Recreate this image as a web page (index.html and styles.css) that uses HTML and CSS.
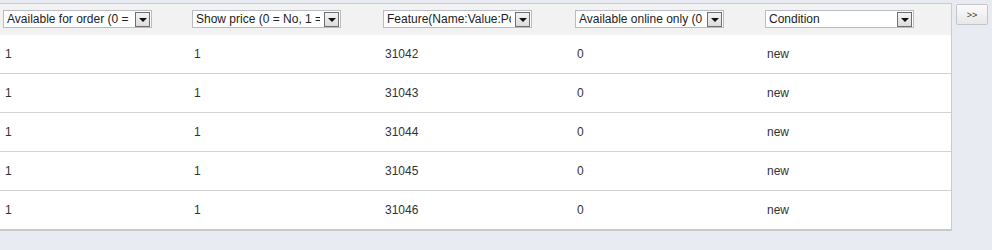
FILE: index.html
```html
<!DOCTYPE html>
<html>
<head>
<meta charset="utf-8">
<link rel="stylesheet" href="styles.css">
</head>
<body>
<div class="page">
  <div class="panel">
    <div class="head">
      <div class="hcell"><div class="sel"><span class="lbl">Available for order (0 = No, 1 = Yes)</span><span class="arr"></span></div></div>
      <div class="hcell"><div class="sel"><span class="lbl">Show price (0 = No, 1 = Yes)</span><span class="arr"></span></div></div>
      <div class="hcell"><div class="sel"><span class="lbl">Feature(Name:Value:Position)</span><span class="arr"></span></div></div>
      <div class="hcell"><div class="sel"><span class="lbl">Available online only (0 = No, 1 = Yes)</span><span class="arr"></span></div></div>
      <div class="hcell"><div class="sel"><span class="lbl">Condition</span><span class="arr"></span></div></div>
    </div>
    <div class="row"><div class="cell">1</div><div class="cell">1</div><div class="cell">31042</div><div class="cell">0</div><div class="cell">new</div></div>
    <div class="row"><div class="cell">1</div><div class="cell">1</div><div class="cell">31043</div><div class="cell">0</div><div class="cell">new</div></div>
    <div class="row"><div class="cell">1</div><div class="cell">1</div><div class="cell">31044</div><div class="cell">0</div><div class="cell">new</div></div>
    <div class="row"><div class="cell">1</div><div class="cell">1</div><div class="cell">31045</div><div class="cell">0</div><div class="cell">new</div></div>
    <div class="row last"><div class="cell">1</div><div class="cell">1</div><div class="cell">31046</div><div class="cell">0</div><div class="cell">new</div></div>
  </div>
  <div class="side"><button class="more">&gt;&gt;</button></div>
</div>
</body>
</html>
```

FILE: styles.css
```css
html, body {
  margin: 0;
  padding: 0;
  background: #e9ebf2;
  font-family: "Liberation Sans", Arial, sans-serif;
  font-size: 12px;
  color: #333;
}
.page {
  display: flex;
  align-items: flex-start;
  padding-top: 3px;
}
.panel {
  width: 951px;
  background: #fff;
  border-top: 1px solid #c9ccd2;
  border-right: 1px solid #c9ccd2;
  border-bottom: 2px solid #c6c8cc;
}
.head {
  display: grid;
  grid-template-columns: 189px 191px 192px 190px 1fr;
  background: #f2f2f2;
  height: 31px;
  align-items: start;
}
.hcell {
  padding: 6px 0 0 3px;
}
.sel {
  display: flex;
  align-items: center;
  width: 147px;
  height: 16px;
  border: 1px solid #b9bcc2;
  background: #fff;
}
.lbl {
  flex: 1;
  min-width: 0;
  overflow: hidden;
  white-space: nowrap;
  margin: 0 4px 0 3px;
  color: #222;
  line-height: 16px;
}
.arr {
  flex: none;
  width: 13px;
  height: 13px;
  margin-right: 1px;
  border: 1px solid #6f6f6f;
  background: linear-gradient(#f4f4f4, #dcdcdc);
  position: relative;
}
.arr::after {
  content: "";
  position: absolute;
  left: 3px;
  top: 5px;
  border-left: 4px solid transparent;
  border-right: 4px solid transparent;
  border-top: 4px solid #111;
}
.row {
  display: grid;
  grid-template-columns: 189px 191px 192px 190px 1fr;
  height: 38px;
  border-bottom: 1px solid #d3d3d3;
}
.row.last {
  border-bottom: none;
}
.cell {
  padding: 12px 0 0 5px;
  line-height: 14px;
  color: #333;
}
.side {
  padding: 1px 0 0 4px;
}
.more {
  width: 32px;
  height: 21px;
  padding: 0;
  border: 1px solid #c4c6ca;
  border-radius: 2px;
  background: linear-gradient(#fbfbfb, #e8e8e8);
  font-family: "Liberation Sans", Arial, sans-serif;
  font-size: 9px;
  color: #333;
}
```
